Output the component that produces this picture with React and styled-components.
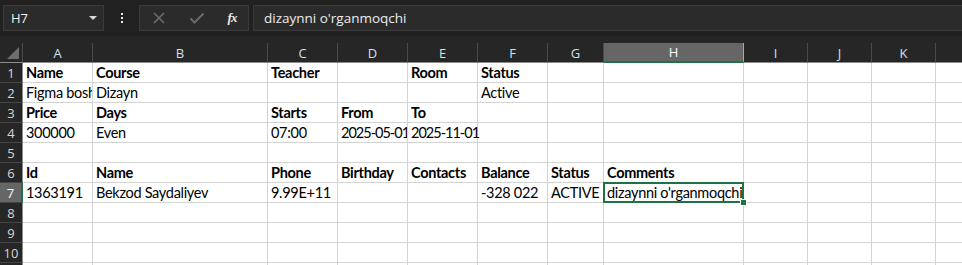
import React from 'react';
import styled, { createGlobalStyle, css } from 'styled-components';

const GlobalStyle = createGlobalStyle`
    html, body {
        margin: 0;
        padding: 0;
        background: #262626;
        overflow: hidden;
    }
`;

const COLS = [
    { id: 'A', w: 70 },
    { id: 'B', w: 175 },
    { id: 'C', w: 70 },
    { id: 'D', w: 70 },
    { id: 'E', w: 70 },
    { id: 'F', w: 70 },
    { id: 'G', w: 56 },
    { id: 'H', w: 140 },
    { id: 'I', w: 64 },
    { id: 'J', w: 64 },
    { id: 'K', w: 64 },
    { id: 'L', w: 64 },
];

// row number -> { colId: [text, bold] }
const DATA = {
    1: { A: ['Name', 1], B: ['Course', 1], C: ['Teacher', 1], E: ['Room', 1], F: ['Status', 1] },
    2: { A: ['Figma boshlang\'ich'], B: ['Dizayn'], F: ['Active'] },
    3: { A: ['Price', 1], B: ['Days', 1], C: ['Starts', 1], D: ['From', 1], E: ['To', 1] },
    4: { A: ['300000'], B: ['Even'], C: ['07:00'], D: ['2025-05-01'], E: ['2025-11-01'] },
    5: {},
    6: { A: ['Id', 1], B: ['Name', 1], C: ['Phone', 1], D: ['Birthday', 1], E: ['Contacts', 1], F: ['Balance', 1], G: ['Status', 1], H: ['Comments', 1] },
    7: { A: ['1363191'], B: ['Bekzod Saydaliyev'], C: ['9.99E+11'], F: ['-328 022'], G: ['ACTIVE'], H: ['dizaynni o\'rganmoqchi'] },
    8: {}, 9: {}, 10: {}, 11: {},
};

const SEL_COL = 'H';
const SEL_ROW = 7;

const isDate = (s) => /^\d{4}-\d\d-\d\d$/.test(s);

const Screen = styled.div`
    width: 962px;
    height: 265px;
    background: #262626;
    font-family: 'Open Sans', 'Noto Sans', sans-serif;
    overflow: hidden;
`;

const FormulaBar = styled.div`
    height: 36px;
    display: flex;
    align-items: center;
    gap: 4px;
    padding: 0 0 0 3px;
    background: #212121;
    box-sizing: border-box;
`;

const NameBox = styled.div`
    width: 101px;
    height: 26px;
    box-sizing: border-box;
    display: flex;
    align-items: center;
    justify-content: space-between;
    padding: 0 6px 0 7px;
    background: #2b2b2b;
    border: 1px solid #3a3a3a;
    color: #f0f0f0;
    font-size: 13px;
`;

const Caret = styled.span`
    width: 0;
    height: 0;
    border-left: 4px solid transparent;
    border-right: 4px solid transparent;
    border-top: 4px solid #d8d8d8;
`;

const Kebab = styled.div`
    width: 27px;
    display: flex;
    flex-direction: column;
    align-items: center;
    gap: 2px;

    span {
        width: 2px;
        height: 2px;
        background: #e8e8e8;
    }
`;

const IconBox = styled.div`
    width: 110px;
    height: 26px;
    box-sizing: border-box;
    display: flex;
    align-items: center;
    justify-content: space-around;
    background: #2b2b2b;
    border: 1px solid #3a3a3a;
`;

const Fx = styled.span`
    font-family: 'Liberation Serif', serif;
    font-style: italic;
    font-weight: bold;
    font-size: 13px;
    color: #eaeaea;
    letter-spacing: -1px;
`;

const Input = styled.div`
    flex: 1;
    height: 26px;
    box-sizing: border-box;
    display: flex;
    align-items: center;
    padding-left: 10px;
    background: #2b2b2b;
    border: 1px solid #3a3a3a;
    border-right: none;
    color: #ececec;
    font-size: 13.5px;
`;

const Gap = styled.div`
    height: 7px;
    background: #262626;
`;

const Grid = styled.div`
    display: grid;
    grid-template-columns: 23px ${COLS.map((c) => `${c.w}px`).join(' ')};
    grid-auto-rows: 20px;
`;

const Corner = styled.div`
    position: relative;
    background: #262626;
    border-bottom: 1px solid #8c8c8c;
    border-right: 1px solid #4a4a4a;

    &::after {
        content: '';
        position: absolute;
        right: 3px;
        bottom: 3px;
        width: 0;
        height: 0;
        border-left: 12px solid transparent;
        border-bottom: 12px solid #6d6d6d;
    }
`;

const ColHead = styled.div`
    display: flex;
    align-items: center;
    justify-content: center;
    background: ${(p) => (p.$sel ? '#666666' : '#262626')};
    border-right: 1px solid ${(p) => (p.$sel ? '#a8a8a8' : '#4a4a4a')};
    border-bottom: ${(p) => (p.$sel ? '2px solid #1f7244' : '1px solid #8c8c8c')};
    color: ${(p) => (p.$sel ? '#ffffff' : '#cfe0f0')};
    font-size: 13px;
    box-sizing: border-box;
`;

const RowHead = styled.div`
    display: flex;
    align-items: center;
    justify-content: center;
    background: ${(p) => (p.$sel ? '#666666' : '#262626')};
    border-bottom: 1px solid #454545;
    border-right: ${(p) => (p.$sel ? '2px solid #1f7244' : '1px solid #8c8c8c')};
    color: ${(p) => (p.$sel ? '#ffffff' : '#d6d6d6')};
    font-size: 13px;
    box-sizing: border-box;
`;

const Cell = styled.div`
    position: relative;
    background: #ffffff;
    border-right: 1px solid #d4d4d4;
    border-bottom: 1px solid #d4d4d4;
    box-sizing: border-box;
    padding: 1px 0 0 3px;
    font-family: 'Lato', 'Open Sans', sans-serif;
    font-size: 14.5px;
    letter-spacing: ${(p) => (p.$tight ? '-1px' : '-0.3px')};
    line-height: 18px;
    color: #000000;
    white-space: nowrap;
    overflow: ${(p) => (p.$clip ? 'hidden' : 'visible')};
    font-weight: ${(p) => (p.$bold ? 700 : 400)};
    z-index: ${(p) => (p.$text ? 1 : 0)};

    ${(p) =>
        p.$sel &&
        css`
            overflow: visible;
            &::before {
                content: '';
                position: absolute;
                left: -1px;
                top: -1px;
                right: -1px;
                bottom: -1px;
                border: 2px solid #1f7244;
                pointer-events: none;
            }
            &::after {
                content: '';
                position: absolute;
                right: -4px;
                bottom: -4px;
                width: 5px;
                height: 5px;
                background: #1f7244;
                border: 1px solid #ffffff;
            }
        `}
`;

const Clip = styled.span`
    display: block;
    overflow: hidden;
    width: 100%;
`;

const X = () => (
    <svg width="14" height="14" viewBox="0 0 14 14">
        <path d="M2 2 L12 12 M12 2 L2 12" stroke="#6b6b6b" strokeWidth="1.6" fill="none" />
    </svg>
);

const Check = () => (
    <svg width="16" height="14" viewBox="0 0 16 14">
        <path d="M1.5 7.5 L5.5 11.5 L14.5 2.5" stroke="#6b6b6b" strokeWidth="2" fill="none" />
    </svg>
);

const hasRightNeighbour = (row, idx) => {
    const next = COLS[idx + 1];
    return next && DATA[row] && DATA[row][next.id];
};

const App = () => {
    const rows = Object.keys(DATA).map(Number);
    return (
        <Screen>
            <GlobalStyle />
            <FormulaBar>
                <NameBox>
                    H7
                    <Caret />
                </NameBox>
                <Kebab>
                    <span />
                    <span />
                    <span />
                </Kebab>
                <IconBox>
                    <X />
                    <Check />
                    <Fx>fx</Fx>
                </IconBox>
                <Input>dizaynni o'rganmoqchi</Input>
            </FormulaBar>
            <Gap />
            <Grid>
                <Corner />
                {COLS.map((c) => (
                    <ColHead key={c.id} $sel={c.id === SEL_COL}>
                        {c.id}
                    </ColHead>
                ))}
                {rows.map((r) => (
                    <React.Fragment key={r}>
                        <RowHead $sel={r === SEL_ROW}>{r}</RowHead>
                        {COLS.map((c, i) => {
                            const v = DATA[r][c.id];
                            const sel = r === SEL_ROW && c.id === SEL_COL;
                            return (
                                <Cell
                                    key={c.id}
                                    $bold={v && v[1]}
                                    $text={!!v}
                                    $tight={v && isDate(v[0])}
                                    $clip={hasRightNeighbour(r, i)}
                                    $sel={sel}
                                >
                                    {v && (sel ? <Clip>{v[0]}</Clip> : v[0])}
                                </Cell>
                            );
                        })}
                    </React.Fragment>
                ))}
            </Grid>
        </Screen>
    );
};

export default App;
